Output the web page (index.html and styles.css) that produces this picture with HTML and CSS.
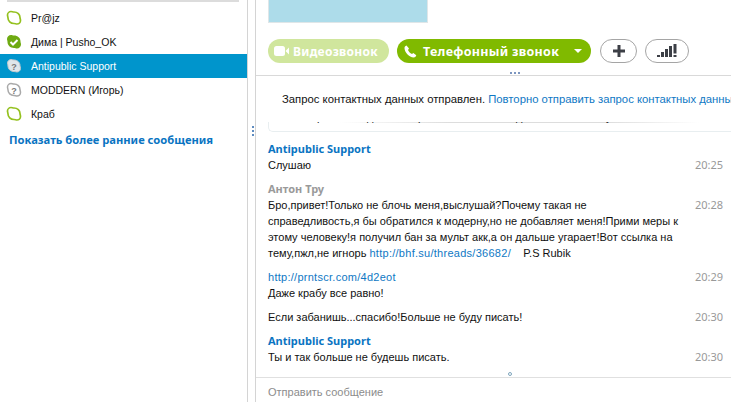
FILE: index.html
```html
<!DOCTYPE html>
<html lang="ru">
<head>
<meta charset="utf-8">
<title>Skype</title>
<link rel="stylesheet" href="styles.css">
</head>
<body>
<div class="app">
  <aside class="sidebar">
    <div class="top-line"></div>
    <ul class="contacts">
      <li class="contact"><svg class="ico" viewBox="0 0 16 16"><path class="away" d="M5 1.500c1 0 1.700.5 3 .5 3.500 0 6 2.500 6 5.500 0 1 .5 1.700.5 3 0 2.200-1.800 3.500-3.500 3.500-1 0-1.800-.5-3-.5-3.500 0-6-2.500-6-5.500 0-1-.5-1.800-.5-3 0-2 1.800-3.500 3.500-3.500z"/></svg>Pr@jz</li>
      <li class="contact"><svg class="ico" viewBox="0 0 16 16"><path class="online" d="M5 1c1 0 1.700.5 3 .5 3.700 0 6.500 2.500 6.500 6 0 1 .5 1.700.5 3 0 2.300-1.800 4-4 4-1 0-1.800-.5-3-.5-3.700 0-6.500-2.800-6.500-6 0-1-.5-1.800-.5-3C1 2.800 2.800 1 5 1z"/><path class="check" d="M4.500 8l2.500 2.500 4.500-4.500"/></svg>Дима | Pusho_OK</li>
      <li class="contact selected"><svg class="ico" viewBox="0 0 16 16"><path class="unknown-fill" d="M5 1.500c1 0 1.700.5 3 .5 3.500 0 6 2.500 6 5.500 0 1 .5 1.700.5 3 0 2.200-1.800 3.500-3.500 3.500-1 0-1.800-.5-3-.5-3.500 0-6-2.500-6-5.500 0-1-.5-1.800-.5-3 0-2 1.800-3.500 3.500-3.500z"/><text x="8" y="11.500" class="q">?</text></svg>Antipublic Support</li>
      <li class="contact"><svg class="ico" viewBox="0 0 16 16"><path class="unknown" d="M5 1.500c1 0 1.700.5 3 .5 3.500 0 6 2.500 6 5.500 0 1 .5 1.700.5 3 0 2.200-1.800 3.500-3.500 3.500-1 0-1.800-.5-3-.5-3.500 0-6-2.500-6-5.500 0-1-.5-1.800-.5-3 0-2 1.800-3.500 3.500-3.500z"/><text x="8" y="11.500" class="q">?</text></svg>MODDERN (Игорь)</li>
      <li class="contact"><svg class="ico" viewBox="0 0 16 16"><path class="away" d="M5 1.500c1 0 1.700.5 3 .5 3.500 0 6 2.500 6 5.500 0 1 .5 1.700.5 3 0 2.200-1.800 3.500-3.500 3.500-1 0-1.800-.5-3-.5-3.500 0-6-2.500-6-5.500 0-1-.5-1.800-.5-3 0-2 1.800-3.500 3.500-3.500z"/></svg>Краб</li>
    </ul>
    <a class="more">Показать более ранние сообщения</a>
  </aside>
  <div class="splitter"><span></span><span></span><span></span></div>
  <main class="main">
    <header class="head">
      <div class="avatar"></div>
      <div class="actions">
        <div class="pill video"><svg class="bi" width="15" height="10" viewBox="0 0 15 10"><rect x="0" y="0" width="11" height="10" rx="2.500"/><path d="M11.500 5l3.500-3.500v7z"/></svg>Видеозвонок</div>
        <div class="pill phone"><svg class="bi" width="13" height="13" viewBox="0 0 13 13"><path d="M2.500.5L5 3.500 4 5c.5 1.500 2 3 4 4l1.300-1 3 2.300c-.5 1.500-1.500 2.200-2.500 2.200C5 12.500.5 7 .5 3 .5 2 1.200 1 2.500.5z"/></svg><span class="phone-label">Телефонный звонок</span><i class="caret"></i></div>
        <div class="ghost plus"><svg width="14" height="14" viewBox="0 0 14 14"><path d="M7 1v12M1 7h12"/></svg></div>
        <div class="ghost signal"><svg width="20" height="14" viewBox="0 0 20 14"><rect x="0" y="11" width="3" height="2"/><rect x="4" y="8" width="3" height="5"/><rect x="8" y="5" width="3" height="8"/><rect x="12" y="2" width="3" height="11"/><rect x="16.500" y="0" width="3" height="9.500"/><rect x="16.500" y="11" width="3" height="2"/></svg></div>
      </div>
      <div class="grip"><span></span><span></span><span></span></div>
    </header>
    <section class="chat">
      <p class="notice">Запрос контактных данных отправлен. <a>Повторно отправить запрос контактных данных</a></p>
      <div class="clipped"><div class="clipped-text"><span>—</span><span>р</span><span>д</span><span>р</span><span>д</span><span>у</span></div></div>
      <div class="msg first"><div class="name">Antipublic Support</div><div class="row"><div class="text">Слушаю</div><time>20:25</time></div></div>
      <div class="msg"><div class="name gray">Антон Тру</div><div class="row"><div class="text">Бро,привет!Только не блочь меня,выслушай?Почему такая не<br>справедливость,я бы обратился к модерну,но не добавляет меня!Прими меры к<br>этому человеку!я получил бан за мульт акк,а он дальше угарает!Вот ссылка на<br>тему,пжл,не игнорь <a>http://bhf.su/threads/36682/</a> &nbsp;&nbsp; P.S Rubik</div><time>20:28</time></div></div>
      <div class="msg solo"><div class="row"><div class="text"><a>http://prntscr.com/4d2eot</a></div><time>20:29</time></div></div>
      <div class="msg tight"><div class="row"><div class="text">Даже крабу все равно!</div></div></div>
      <div class="msg solo"><div class="row"><div class="text">Если забанишь...спасибо!Больше не буду писать!</div><time>20:30</time></div></div>
      <div class="msg"><div class="name">Antipublic Support</div><div class="row"><div class="text">Ты и так больше не будешь писать.</div><time>20:30</time></div></div>
      <div class="resize-dot"></div>
    </section>
    <footer class="composer">Отправить сообщение</footer>
  </main>
</div>
</body>
</html>
```
FILE: styles.css
```css
* { box-sizing: border-box; }
html, body { margin: 0; height: 100%; }
body { font-family: "Liberation Sans", sans-serif; font-size: 11px; color: #111; background: #fff; overflow: hidden; }
a { color: #0f78c4; }
.app { display: flex; width: 731px; height: 402px; overflow: hidden; }
.sidebar { width: 248px; flex: none; border-right: 1px solid #d4d4d4; }
.top-line { height: 2px; margin: 0 8px 0 7px; background: #dcdcdc; }
.contacts { list-style: none; margin: 4px 0 0; padding: 0; }
.contact { height: 24px; display: flex; align-items: center; padding-left: 6px; gap: 9px; font-size: 10.500px; }
.contact.selected { background: #0095cc; color: #fff; }
.ico { width: 16px; height: 16px; flex: none; }
.away { fill: #fff; stroke: #94c11f; stroke-width: 1.700; }
.online { fill: #6eaa12; }
.check { fill: none; stroke: #fff; stroke-width: 2; }
.unknown { fill: #fff; stroke: #a9a9a9; stroke-width: 1.500; }
.unknown-fill { fill: #dfe6ea; stroke: #c2c8cc; stroke-width: 1; }
.q { font: bold 9px "Liberation Sans", sans-serif; fill: #777; text-anchor: middle; }
.more { display: block; margin: 6px 0 0 9px; font-family: "Noto Sans", sans-serif; font-weight: 700; font-size: 11.200px; color: #0a74c2; line-height: 16px; }
.splitter { width: 8px; flex: none; border-right: 1px solid #d4d4d4; display: flex; flex-direction: column; align-items: flex-start; gap: 2px; padding: 126px 0 0 4px; }
.splitter span { width: 2px; height: 2px; background: #5f8cc0; }
.main { flex: 1; min-width: 0; display: flex; flex-direction: column; }
.head { height: 76px; flex: none; padding-left: 12px; border-bottom: 1px solid #d9d9d9; position: relative; }
.avatar { width: 160px; height: 23px; background: #addcea; border: 1px solid #dfe6e8; border-top: 0; }
.actions { display: flex; align-items: center; margin-top: 16px; }
.pill { height: 24px; border-radius: 12px; display: flex; align-items: center; color: #fff; font-family: "Noto Sans", sans-serif; font-weight: 700; font-size: 12px; letter-spacing: .3px; }
.bi { fill: #fff; flex: none; }
.video { width: 121px; background: #d0e69d; padding-left: 6px; gap: 4px; margin-right: 8px; }
.phone { width: 194px; background: #80ba00; padding-left: 7px; margin-right: 9px; }
.phone-label { margin-left: 6px; font-size: 12.500px; }
.caret { margin-left: 15px; width: 0; height: 0; border: 4px solid transparent; border-top: 4px solid #fff; border-bottom: 0; }
.ghost { height: 24px; border: 1px solid #a5a5a5; border-radius: 12px; display: flex; align-items: center; justify-content: center; }
.plus { width: 37px; margin-right: 8px; }
.plus path { stroke: #3c3f46; stroke-width: 3; fill: none; }
.signal { width: 44px; }
.signal rect { fill: #3c3f46; }
.grip { position: absolute; left: 254px; bottom: 1px; display: flex; gap: 2px; }
.grip span { width: 2px; height: 2px; background: #7c96c0; }
.chat { flex: 1; min-height: 0; position: relative; border-bottom: 1px solid #e0e0e0; padding-left: 12px; }
.notice { margin: 15px 0 0 14px; font-size: 11.300px; line-height: 16px; white-space: nowrap; }
.clipped { width: 463px; height: 10px; margin-top: 15px; border: 1px solid #e8eef0; border-top: 0; border-right: 0; border-radius: 0 0 0 5px; overflow: hidden; background: linear-gradient(90deg, transparent 70px, #ddd 180px, #ddd 340px, transparent 430px) top / 100% 1px no-repeat; }
.clipped-text { display: grid; grid-template-columns: 41px 50px 51px 98px 90px 1fr; margin-top: -13px; padding-left: 7px; line-height: 16px; color: #222; }
.msg { margin-top: 8px; }
.msg.first { margin-top: 9px; }
.msg.tight { margin-top: 0; }
.name { font-family: "Noto Sans", sans-serif; font-size: 11px; font-weight: 700; color: #0a74c2; line-height: 16px; }
.name.gray { color: #9a9a9a; }
.row { display: flex; line-height: 16px; padding-right: 8px; }
.text { flex: 1; min-width: 0; white-space: nowrap; }
.text a { letter-spacing: .27px; }
time { flex: none; font-family: "Noto Sans", sans-serif; color: #999; font-size: 11px; }
.resize-dot { position: absolute; left: 252px; bottom: 1px; width: 4px; height: 4px; border: 1px solid #7fa6bd; border-radius: 50%; }
.composer { height: 24px; flex: none; padding: 6px 0 0 12px; color: #8c8c8c; line-height: 16px; }
```
